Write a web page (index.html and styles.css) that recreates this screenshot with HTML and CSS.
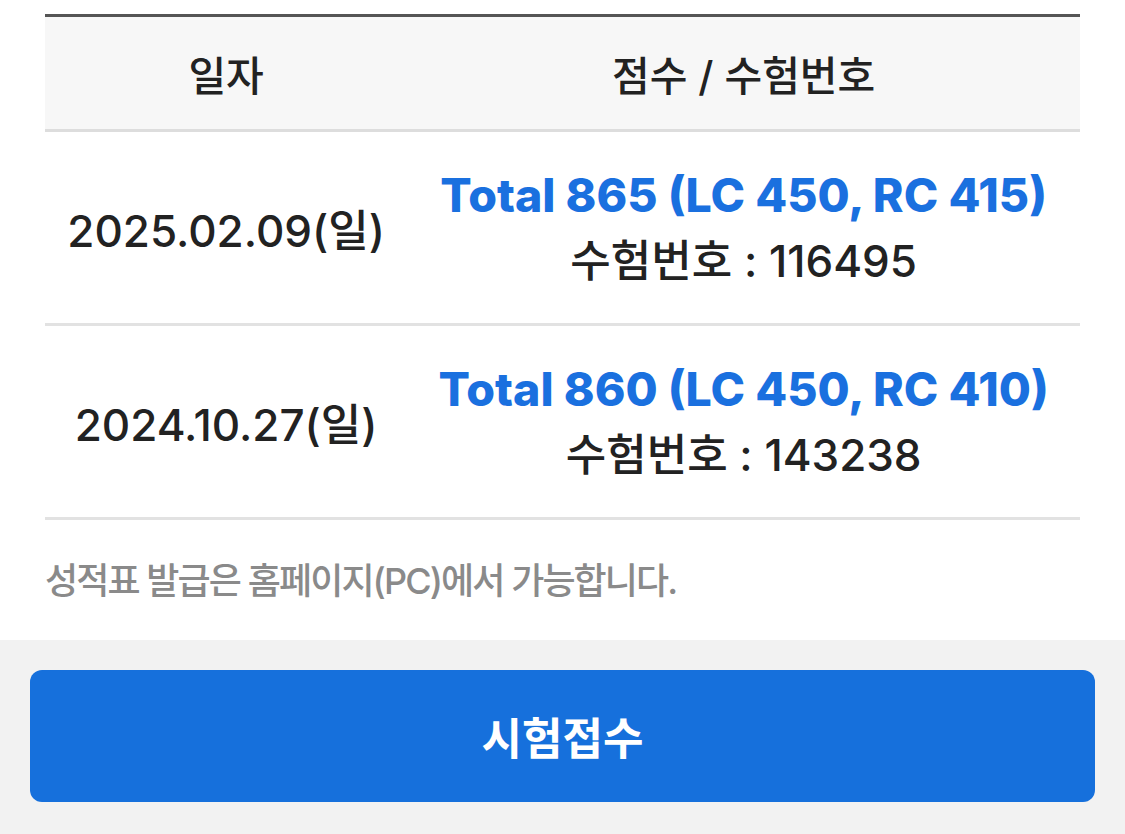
FILE: index.html
```html
<!DOCTYPE html>
<html lang="ko">
<head>
    <meta charset="UTF-8">
    <meta name="viewport" content="width=device-width, initial-scale=1.0">
    <title>성적 조회</title>
    <link rel="stylesheet" href="styles.css">
</head>
<body>
    <div class="content">
        <table class="score-table">
            <colgroup>
                <col class="col-date">
                <col class="col-score">
            </colgroup>
            <thead>
                <tr>
                    <th>일자</th>
                    <th>점수 / 수험번호</th>
                </tr>
            </thead>
            <tbody>
                <tr>
                    <td class="date">2025.02.09(일)</td>
                    <td>
                        <p class="total">Total 865 (LC 450, RC 415)</p>
                        <p class="exam-no">수험번호 : 116495</p>
                    </td>
                </tr>
                <tr>
                    <td class="date">2024.10.27(일)</td>
                    <td>
                        <p class="total">Total 860 (LC 450, RC 410)</p>
                        <p class="exam-no">수험번호 : 143238</p>
                    </td>
                </tr>
            </tbody>
        </table>
        <p class="note">성적표 발급은 홈페이지(PC)에서 가능합니다.</p>
    </div>

    <div class="bottom-bar">
        <button class="btn" type="button">시험접수</button>
    </div>
</body>
</html>
```

FILE: styles.css
```css
body {
    margin: 0;
    font-family: Inter, "Noto Sans CJK KR", sans-serif;
    background: #fff;
    color: #222;
}

.content {
    height: 640px;
    box-sizing: border-box;
    padding: 14px 45px 0;
    background: #fff;
}

.score-table {
    width: 100%;
    border-collapse: collapse;
    border-top: 3px solid #555;
    text-align: center;
}

.col-date {
    width: 35%;
}

.score-table th {
    height: 112px;
    padding: 0;
    background: #f7f7f7;
    border-bottom: 3px solid #ddd;
    font-size: 41px;
    font-weight: 500;
    color: #222;
}

.score-table td {
    height: 191px;
    padding: 0;
    border-bottom: 3px solid #e2e2e2;
}

.date {
    font-size: 44px;
    font-weight: 500;
}

.total {
    margin: 0;
    font-size: 46.5px;
    font-weight: 800;
    color: #1a70df;
    line-height: 56px;
}

.exam-no {
    margin: 10px 0 0;
    font-size: 44px;
    font-weight: 500;
    line-height: 56px;
}

.note {
    margin: 32px 0 0;
    font-size: 36px;
    font-weight: 500;
    letter-spacing: -1.9px;
    color: #8a8a8a;
}

.bottom-bar {
    height: 194px;
    box-sizing: border-box;
    padding: 30px;
    background: #f2f2f2;
}

.btn {
    width: 100%;
    height: 132px;
    border: none;
    border-radius: 12px;
    background: #1670dc;
    color: #fff;
    font-family: "Noto Sans CJK KR", sans-serif;
    font-size: 44px;
    font-weight: 700;
    cursor: pointer;
}
```
